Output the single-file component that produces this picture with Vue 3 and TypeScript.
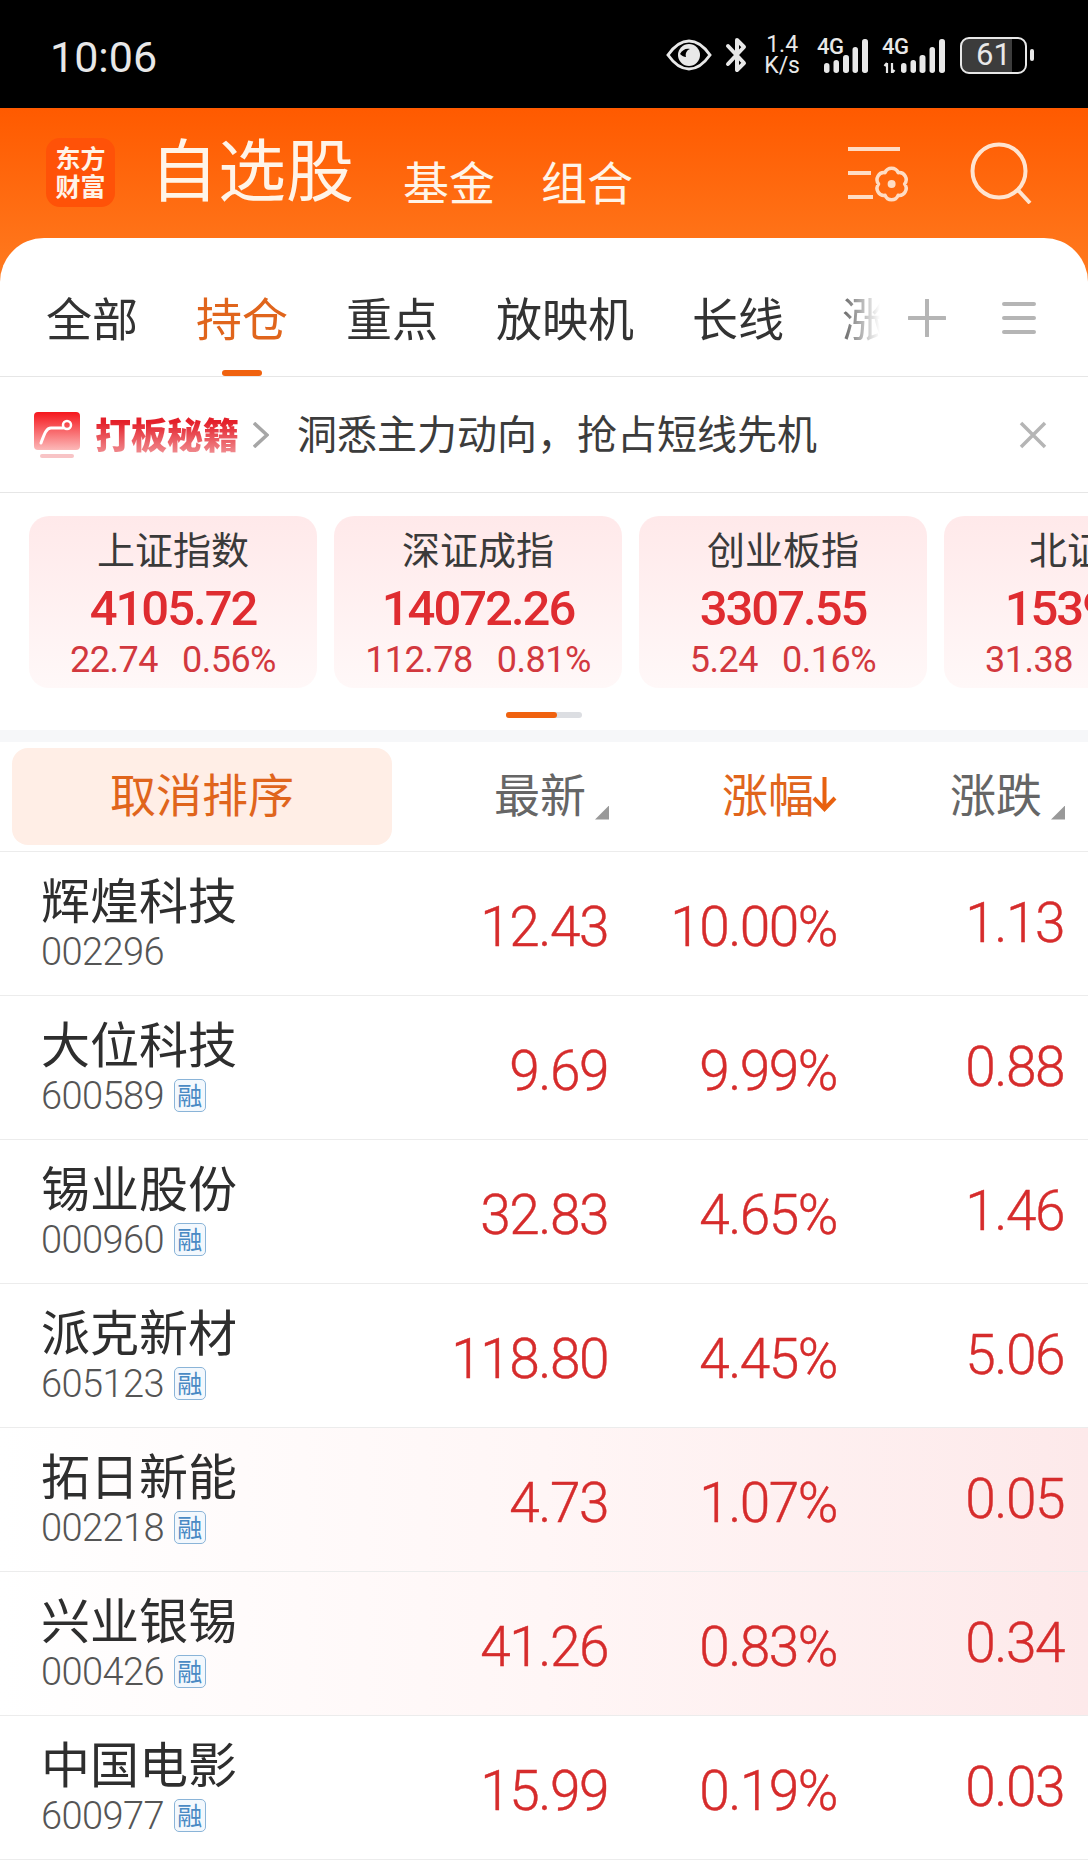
<script setup lang="ts">
const tabs = ["全部", "持仓", "重点", "放映机", "长线", "涨停"];

const indexes = [
  { name: "上证指数", value: "4105.72", change: "22.74", pct: "0.56%" },
  { name: "深证成指", value: "14072.26", change: "112.78", pct: "0.81%" },
  { name: "创业板指", value: "3307.55", change: "5.24", pct: "0.16%" },
  { name: "北证50", value: "1539.63", change: "31.38", pct: "2.08%" },
];

const stocks = [
  { name: "辉煌科技", code: "002296", price: "12.43", pct: "10.00%", change: "1.13", margin: false, heat: false },
  { name: "大位科技", code: "600589", price: "9.69", pct: "9.99%", change: "0.88", margin: true, heat: false },
  { name: "锡业股份", code: "000960", price: "32.83", pct: "4.65%", change: "1.46", margin: true, heat: false },
  { name: "派克新材", code: "605123", price: "118.80", pct: "4.45%", change: "5.06", margin: true, heat: false },
  { name: "拓日新能", code: "002218", price: "4.73", pct: "1.07%", change: "0.05", margin: true, heat: true },
  { name: "兴业银锡", code: "000426", price: "41.26", pct: "0.83%", change: "0.34", margin: true, heat: true },
  { name: "中国电影", code: "600977", price: "15.99", pct: "0.19%", change: "0.03", margin: true, heat: false },
];
</script>

<template>
  <div class="page">
    <div class="status">
      <span class="time">10:06</span>
      <div class="status-icons">
        <svg class="eye" width="46" height="32" viewBox="0 0 46 32">
          <path d="M2 16C9 6 16 2 23 2s14 4 21 14c-7 10-14 14-21 14S9 26 2 16z" fill="none" stroke="#e8e8e8" stroke-width="3" />
          <circle cx="23" cy="16" r="11" fill="#e8e8e8" />
          <path d="M14 15c2-4 6-6 10-5-3 1-5 4-4 8-2 0-4-1-6-3z" fill="#000" />
        </svg>
        <svg class="bt" width="22" height="36" viewBox="0 0 22 36">
          <path d="M3 9l16 17-7 7V3l7 7L3 27" fill="none" stroke="#e8e8e8" stroke-width="4" stroke-linejoin="round" stroke-linecap="round" />
        </svg>
        <div class="speed"><span>1.4</span><span>K/s</span></div>
        <div class="signal">
          <span class="net">4G</span>
          <svg width="44" height="34" viewBox="0 0 44 34">
            <rect x="0" y="24" width="5.5" height="10" rx="2.7" fill="#e8e8e8" />
            <rect x="9.5" y="21" width="5.5" height="13" rx="2.7" fill="#e8e8e8" />
            <rect x="19" y="16" width="6" height="18" rx="2.7" fill="#e8e8e8" />
            <rect x="28.5" y="8" width="5.5" height="26" rx="2.7" fill="#e8e8e8" />
            <rect x="38" y="0" width="6" height="34" rx="2.7" fill="#e8e8e8" />
          </svg>
        </div>
        <div class="signal second">
          <span class="net">4G</span>
          <svg width="62" height="34" viewBox="0 0 62 34">
            <path d="M4 24v10M1.5 27L4 24M9 24v10M11.5 31L9 34" fill="none" stroke="#e8e8e8" stroke-width="2.2" />
            <rect x="18" y="24" width="5.5" height="10" rx="2.7" fill="#e8e8e8" />
            <rect x="27.5" y="21" width="5.5" height="13" rx="2.7" fill="#e8e8e8" />
            <rect x="36.5" y="16" width="6" height="18" rx="2.7" fill="#e8e8e8" />
            <rect x="46.5" y="8" width="5.5" height="26" rx="2.7" fill="#e8e8e8" />
            <rect x="56" y="0" width="6" height="34" rx="2.7" fill="#e8e8e8" />
          </svg>
        </div>
        <div class="battery"><span>61</span></div>
        <span class="battery-cap"></span>
      </div>
    </div>

    <div class="top">
      <div class="logo"><span>东方</span><span>财富</span></div>
      <span class="title">自选股</span>
      <span class="sub first">基金</span>
      <span class="sub">组合</span>
      <svg class="gear" width="64" height="58" viewBox="0 0 64 58">
        <path d="M1 2h52M1 26h23M1 50h25" fill="none" stroke="#ffdcc4" stroke-width="4" />
        <path d="M57.6 37A7 7 0 0 1 51.1 48.3A7 7 0 0 1 38.1 48.3A7 7 0 0 1 31.6 37A7 7 0 0 1 38.1 25.7A7 7 0 0 1 51.1 25.7A7 7 0 0 1 57.6 37Z" fill="none" stroke="#ffdcc4" stroke-width="3.5" stroke-linejoin="round" />
        <circle cx="44.6" cy="37" r="4" fill="#ffdcc4" />
      </svg>
      <svg class="search" width="62" height="62" viewBox="0 0 62 62">
        <circle cx="29" cy="29" r="26.5" fill="none" stroke="#ffe4d0" stroke-width="4" />
        <path d="M47 47l13 14" fill="none" stroke="#ffe4d0" stroke-width="4" />
      </svg>
    </div>

    <div class="sheet">
      <div class="tabs">
        <div class="tab-scroll">
          <span v-for="(tab, i) in tabs" :key="tab" class="tab" :class="{ active: i === 1 }">{{ tab }}</span>
        </div>
        <svg class="plus" width="38" height="38" viewBox="0 0 38 38">
          <path d="M19 1v36M1 19h36" fill="none" stroke="#b5b5b5" stroke-width="4" stroke-linecap="round" />
        </svg>
        <svg class="menu" width="34" height="34" viewBox="0 0 34 34">
          <path d="M2 3h30M2 17h30M2 31h30" fill="none" stroke="#b5b5b5" stroke-width="4" stroke-linecap="round" />
        </svg>
      </div>

      <div class="banner">
        <svg class="banner-icon" width="46" height="46" viewBox="0 0 46 46">
          <defs>
            <linearGradient id="bannerRed" x1="0" y1="0" x2="0" y2="1">
              <stop offset="0" stop-color="#f5161c" />
              <stop offset="1" stop-color="#fcb9b9" />
            </linearGradient>
          </defs>
          <rect width="46" height="38" rx="4" fill="url(#bannerRed)" />
          <rect x="6" y="42" width="34" height="4" rx="2" fill="#f8c4c6" />
          <path d="M7 31c3-8 5-15 10-15h12" fill="none" stroke="#fff" stroke-width="3" stroke-linecap="round" />
          <circle cx="33" cy="13" r="4" fill="none" stroke="#fff" stroke-width="2.5" />
        </svg>
        <span class="banner-name">打板秘籍</span>
        <svg class="chevron" width="16" height="26" viewBox="0 0 16 26">
          <path d="M1 1l13 12L1 25" fill="none" stroke="#a6a6a6" stroke-width="3.5" />
        </svg>
        <span class="banner-text">洞悉主力动向，抢占短线先机</span>
        <svg class="close" width="28" height="28" viewBox="0 0 28 28">
          <path d="M2 2l24 24M26 2L2 26" fill="none" stroke="#b5b5b5" stroke-width="3.5" />
        </svg>
      </div>

      <div class="index-wrap">
        <div class="index-row">
          <div v-for="item in indexes" :key="item.name" class="index-card">
            <div class="index-name">{{ item.name }}</div>
            <div class="index-value">{{ item.value }}</div>
            <div class="index-sub">
              <span>{{ item.change }}</span>
              <span>{{ item.pct }}</span>
            </div>
          </div>
        </div>
        <div class="indicator"><span></span></div>
      </div>

      <div class="band"></div>

      <div class="head">
        <div class="sort-btn">取消排序</div>
        <div class="head-cell">最新<i class="corner"></i></div>
        <div class="head-cell current">
          涨幅
          <svg width="25" height="38" viewBox="0 0 25 38">
            <path d="M12.5 2v32M2 23l10.5 11L23 23" fill="none" stroke="#e8610f" stroke-width="4" />
          </svg>
        </div>
        <div class="head-cell">涨跌<i class="corner"></i></div>
      </div>

      <div v-for="stock in stocks" :key="stock.code" class="row" :class="{ heat: stock.heat }">
        <div class="stock">
          <div class="stock-name">{{ stock.name }}</div>
          <div class="stock-code">
            {{ stock.code }}
            <span v-if="stock.margin" class="tag">融</span>
          </div>
        </div>
        <div class="num">{{ stock.price }}</div>
        <div class="num">{{ stock.pct }}</div>
        <div class="num change">{{ stock.change }}</div>
      </div>
    </div>
  </div>
</template>

<style>
html,
body {
  margin: 0;
  background: #fff;
}
</style>

<style scoped>
.page {
  width: 1088px;
  height: 1860px;
  overflow: hidden;
  background: #fff;
  font-family: "Noto Sans CJK SC", "Noto Sans", sans-serif;
  color: #333;
}

.status {
  height: 108px;
  background: #000;
  color: #e8e8e8;
  display: flex;
  align-items: center;
  justify-content: space-between;
  padding: 0 54px 0 50px;
  box-sizing: border-box;
}

.time {
  font-family: Roboto, sans-serif;
  font-size: 43px;
  line-height: 48px;
  margin-top: 5px;
}

.status-icons {
  display: flex;
  align-items: center;
  margin-top: 2px;
}

.bt {
  margin-left: 13px;
}

.speed {
  display: flex;
  flex-direction: column;
  align-items: center;
  margin-left: 17px;
  font-family: Roboto, sans-serif;
  font-size: 23px;
  line-height: 21px;
}

.signal {
  position: relative;
  display: flex;
  align-items: flex-end;
  margin-left: 17px;
  height: 36px;
  width: 51px;
  justify-content: flex-end;
}

.signal.second {
  margin-left: 14px;
  width: 63px;
}

.net {
  position: absolute;
  left: 0;
  top: -1px;
  font-family: Roboto, sans-serif;
  font-weight: 500;
  font-size: 22px;
  line-height: 22px;
  letter-spacing: -0.5px;
}

.battery {
  width: 67px;
  height: 37px;
  margin-left: 15px;
  box-sizing: border-box;
  border: 2.5px solid #e8e8e8;
  border-radius: 9px;
  background: linear-gradient(90deg, #3c3c3c 80%, #000 80%);
  display: flex;
  align-items: center;
  justify-content: center;
  font-family: Roboto, sans-serif;
  font-size: 31px;
  line-height: 32px;
}

.battery-cap {
  width: 4px;
  height: 12px;
  margin-left: 3px;
  border-radius: 2px;
  background: #e8e8e8;
}

.top {
  height: 174px;
  box-sizing: border-box;
  padding: 30px 0 0 46px;
  background: linear-gradient(180deg, #ff5a00 0%, #ff7b20 100%);
  display: flex;
  align-items: flex-start;
  color: #fff4e8;
}

.logo {
  width: 69px;
  height: 69px;
  border-radius: 14px;
  background: #ff5208;
  display: flex;
  flex-direction: column;
  align-items: center;
  justify-content: center;
  font-size: 25px;
  line-height: 28px;
  font-weight: 700;
  flex: none;
  padding-bottom: 3px;
  box-sizing: border-box;
}

.title {
  font-size: 68px;
  line-height: 68px;
  margin: -5px 49px 0 35px;
}

.sub {
  font-size: 46px;
  line-height: 46px;
  margin: 19px 46px 0 0;
}

.gear {
  position: absolute;
  left: 847px;
  top: 147px;
}

.search {
  position: absolute;
  left: 970px;
  top: 142px;
}

.sheet {
  margin-top: -44px;
  position: relative;
  background: #fff;
  border-radius: 44px 44px 0 0;
}

.tabs {
  height: 139px;
  box-sizing: border-box;
  padding-top: 24px;
  border-bottom: 1px solid #e6e6e6;
  display: flex;
  align-items: center;
  position: relative;
}

.tab-scroll {
  width: 880px;
  height: 100%;
  padding-left: 46px;
  box-sizing: border-box;
  display: flex;
  align-items: center;
  gap: 58px;
  overflow: hidden;
  -webkit-mask-image: linear-gradient(90deg, #000 830px, transparent 880px);
  mask-image: linear-gradient(90deg, #000 830px, transparent 880px);
}

.tab {
  position: relative;
  flex: none;
  font-size: 46px;
  line-height: 60px;
  padding-bottom: 6px;
}

.tab.active {
  color: #e0651c;
  align-self: stretch;
  display: flex;
  align-items: center;
}

.tab.active::after {
  content: "";
  position: absolute;
  left: 26px;
  bottom: 0;
  width: 40px;
  height: 6px;
  border-radius: 3px;
  background: #f0620f;
}

.plus {
  margin: 0 0 2px 28px;
}

.menu {
  margin: 0 0 2px 56px;
}

.banner {
  height: 116px;
  box-sizing: border-box;
  padding-left: 34px;
  border-bottom: 1px solid #e6e6e6;
  display: flex;
  align-items: center;
}

.banner-name {
  margin: -4px 0 0 15px;
  font-size: 36px;
  font-weight: 900;
  line-height: 44px;
  background: linear-gradient(180deg, #e4202a 25%, #f08a8e 95%);
  -webkit-background-clip: text;
  background-clip: text;
  color: transparent;
}

.chevron {
  margin-left: 14px;
}

.banner-text {
  margin-left: 28px;
  padding-bottom: 6px;
  font-size: 40px;
  line-height: 50px;
  color: #3c3c3c;
  white-space: nowrap;
}

.close {
  margin-left: auto;
  margin-right: 41px;
}

.index-wrap {
  padding-top: 23px;
  height: 237px;
  box-sizing: border-box;
}

.index-row {
  display: flex;
  gap: 17px;
  padding-left: 29px;
  overflow: hidden;
}

.index-card {
  flex: none;
  width: 288px;
  height: 172px;
  box-sizing: border-box;
  padding-top: 10px;
  border-radius: 20px;
  background: linear-gradient(180deg, #ffe9ea 0%, #fff8f8 100%);
  display: flex;
  flex-direction: column;
  align-items: center;
  gap: 7px;
  white-space: nowrap;
}

.index-name {
  font-size: 38px;
  line-height: 44px;
  margin-bottom: 6px;
  color: #3a3a3a;
}

.index-value {
  font-family: Roboto, sans-serif;
  font-weight: 500;
  font-size: 49px;
  line-height: 52px;
  margin-bottom: -2px;
  letter-spacing: -2px;
  color: #df2c30;
}

.index-sub {
  font-family: Roboto, sans-serif;
  font-size: 36px;
  line-height: 40px;
  letter-spacing: -0.5px;
  color: #d2383e;
  display: flex;
  gap: 24px;
}

.indicator {
  width: 76px;
  height: 6px;
  margin: 24px auto 0;
  border-radius: 3px;
  background: #dcdee2;
}

.indicator span {
  display: block;
  width: 51px;
  height: 100%;
  border-radius: 3px;
  background: #f0620f;
}

.band {
  height: 12px;
  background: #f6f7f9;
}

.head {
  height: 110px;
  box-sizing: border-box;
  padding: 6px 23px 6px 12px;
  border-bottom: 1px solid #ececec;
  display: grid;
  grid-template-columns: 380px 217px 228px 228px;
  align-items: center;
}

.sort-btn {
  height: 97px;
  box-sizing: border-box;
  padding-bottom: 10px;
  border-radius: 16px;
  background: #ffeee6;
  color: #e0651c;
  font-size: 46px;
  display: flex;
  align-items: center;
  justify-content: center;
}

.head-cell {
  display: flex;
  justify-content: flex-end;
  margin-top: -10px;
  font-size: 46px;
  line-height: 52px;
  color: #666;
  white-space: nowrap;
}

.head-cell.current {
  color: #e0651c;
  align-items: center;
}

.head-cell.current svg {
  margin: 4px 0 0 -2px;
}

.corner {
  display: block;
  align-self: flex-end;
  width: 14px;
  height: 14px;
  margin: 0 0 -2px 9px;
  background: #999;
  clip-path: polygon(100% 0, 100% 100%, 0 100%);
}

.row {
  height: 144px;
  box-sizing: border-box;
  padding: 0 24px 0 41px;
  border-bottom: 1px solid #ececec;
  display: grid;
  grid-template-columns: 1fr 170px 229px 227px;
  align-items: center;
}

.row.heat {
  background: linear-gradient(90deg, #fff 0%, #fff6f6 50%, #fde9ea 100%);
}

.stock {
  margin-top: -8px;
}

.stock-name {
  font-size: 49px;
  line-height: 56px;
  color: #2e2e2e;
}

.stock-code {
  display: flex;
  align-items: center;
  gap: 10px;
  height: 36px;
  margin-top: 8px;
  font-family: Roboto, sans-serif;
  font-weight: 300;
  font-size: 38px;
  letter-spacing: -0.6px;
  color: #555;
}

.tag {
  width: 32px;
  height: 33px;
  box-sizing: border-box;
  border: 1.5px solid #8ab4d8;
  border-radius: 5px;
  background: #f3f8fd;
  color: #4a8ac4;
  font-family: "Noto Sans CJK SC", sans-serif;
  font-weight: 400;
  font-size: 25px;
  line-height: 28px;
  letter-spacing: 0;
  text-align: center;
}

.num {
  font-family: Roboto, sans-serif;
  font-weight: 300;
  font-size: 55px;
  letter-spacing: -1.5px;
  line-height: 60px;
  text-align: right;
  color: #d62c2c;
  -webkit-text-stroke: 0.4px #d62c2c;
  margin-top: 6px;
}

.num.change {
  margin-top: -2px;
}
</style>
